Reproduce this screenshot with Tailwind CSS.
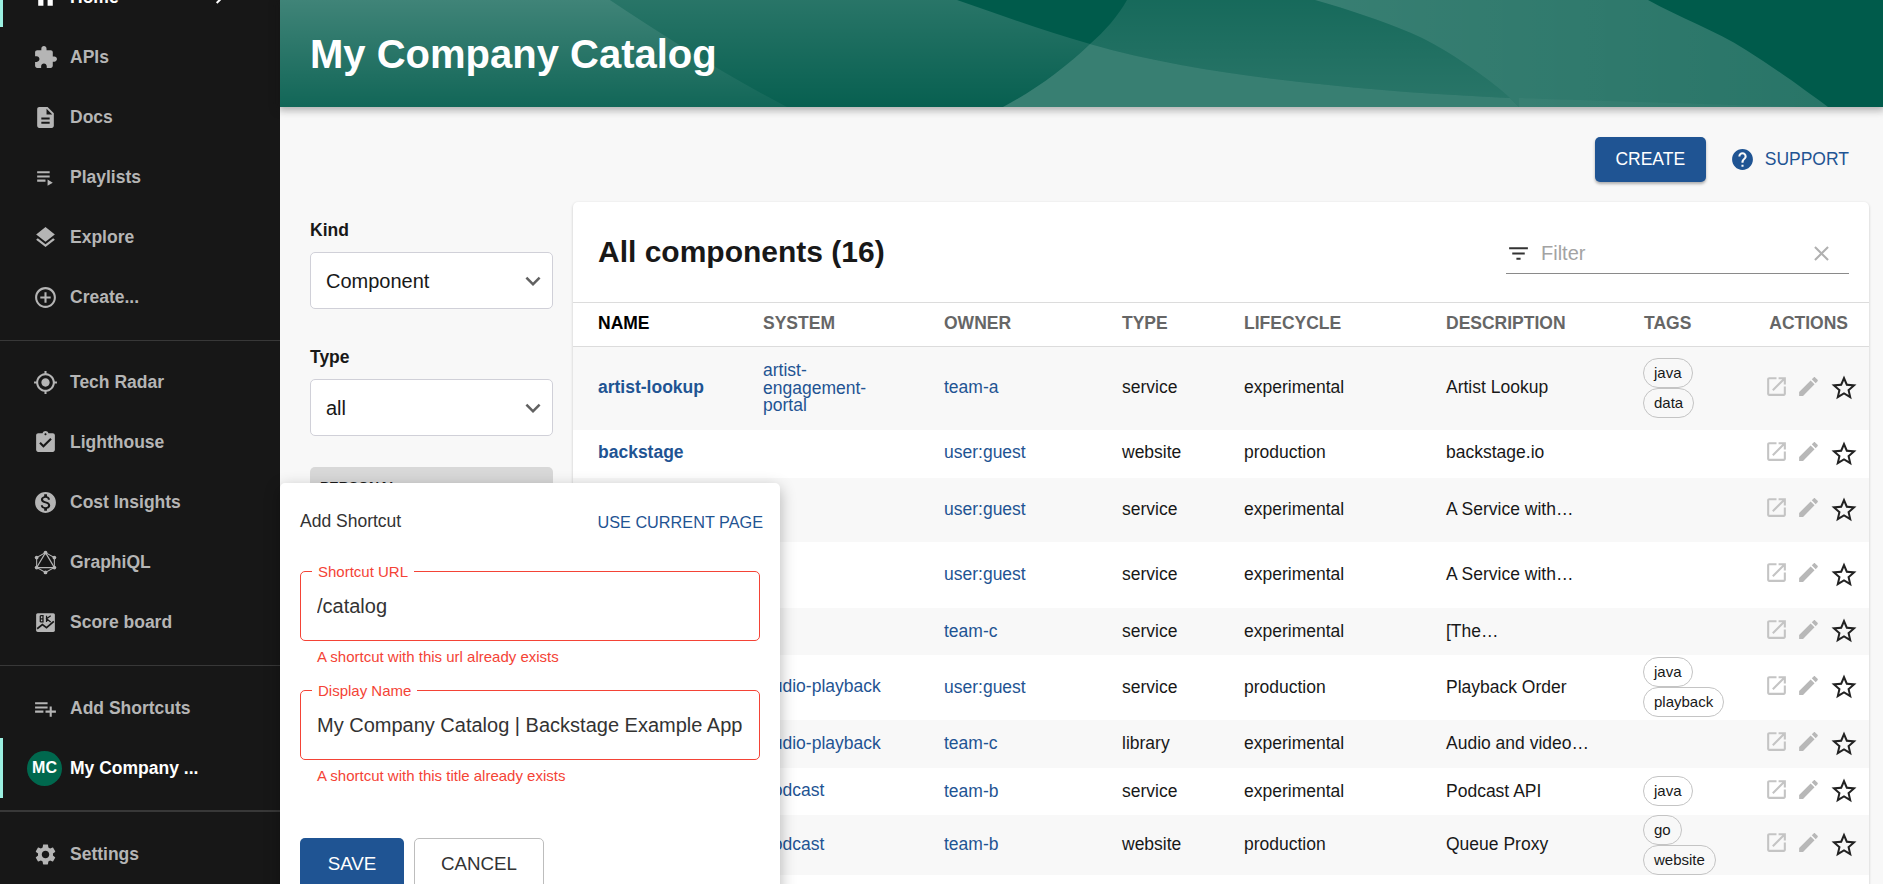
<!DOCTYPE html>
<html lang="en">

<head>
    <meta charset="UTF-8">
    <meta name="viewport" content="width=device-width, initial-scale=1.0">
    <title>My Company Catalog | Backstage Example App</title>
    <script src="https://cdn.jsdelivr.net/npm/@tailwindcss/browser@4"></script>
</head>

<body class="bg-[#f8f8f8] font-['Liberation_Sans',Arial,sans-serif] text-[#181818]">
    <svg class="hidden">
        <symbol id="i-home" viewBox="0 0 24 24"><path d="M10 20v-6h4v6h5v-8h3L12 3 2 12h3v8z"/></symbol>
        <symbol id="i-chevron" viewBox="0 0 24 24"><path d="M10 6L8.59 7.41 13.17 12l-4.58 4.59L10 18l6-6z"/></symbol>
        <symbol id="i-ext" viewBox="0 0 24 24"><path d="M20.5 11H19V7c0-1.1-.9-2-2-2h-4V3.5C13 2.12 11.88 1 10.5 1S8 2.12 8 3.5V5H4c-1.1 0-1.99.9-1.99 2v3.8H3.5c1.49 0 2.7 1.21 2.7 2.7s-1.21 2.7-2.7 2.7H2V20c0 1.1.9 2 2 2h3.8v-1.5c0-1.49 1.21-2.7 2.7-2.7 1.49 0 2.7 1.21 2.7 2.7V22H17c1.1 0 2-.9 2-2v-4h1.5c1.38 0 2.5-1.12 2.5-2.5S21.88 11 20.5 11z"/></symbol>
        <symbol id="i-doc" viewBox="0 0 24 24"><path d="M14 2H6c-1.1 0-1.99.9-1.99 2L4 20c0 1.1.89 2 1.99 2H18c1.1 0 2-.9 2-2V8l-6-6zm2 16H8v-2h8v2zm0-4H8v-2h8v2zm-3-5V3.5L18.5 9H13z"/></symbol>
        <symbol id="i-playlist" viewBox="0 0 24 24"><path d="M4 10h12v2H4zm0-4h12v2H4zm0 8h8v2H4zm10 0v6l5-3z"/></symbol>
        <symbol id="i-layers" viewBox="0 0 24 24"><path d="M11.99 18.54l-7.37-5.73L3 14.07l9 7 9-7-1.63-1.27-7.38 5.74zM12 16l7.36-5.73L21 9l-9-7-9 7 1.63 1.27L12 16z"/></symbol>
        <symbol id="i-add" viewBox="0 0 24 24"><path d="M13 7h-2v4H7v2h4v4h2v-4h4v-2h-4V7zm-1-5C6.48 2 2 6.48 2 12s4.48 10 10 10 10-4.48 10-10S17.52 2 12 2zm0 18c-4.41 0-8-3.59-8-8s3.59-8 8-8 8 3.59 8 8-3.59 8-8 8z"/></symbol>
        <symbol id="i-radar" viewBox="0 0 24 24"><path d="M12 8c-2.21 0-4 1.79-4 4s1.79 4 4 4 4-1.79 4-4-1.79-4-4-4zm8.94 3c-.46-4.17-3.77-7.48-7.94-7.94V1h-2v2.06C6.83 3.52 3.52 6.83 3.06 11H1v2h2.06c.46 4.17 3.77 7.48 7.94 7.94V23h2v-2.06c4.17-.46 7.48-3.77 7.94-7.94H23v-2h-2.06zM12 19c-3.87 0-7-3.13-7-7s3.13-7 7-7 7 3.13 7 7-3.13 7-7 7z"/></symbol>
        <symbol id="i-light" viewBox="0 0 24 24"><path d="M19 3h-4.18C14.4 1.84 13.3 1 12 1c-1.3 0-2.4.84-2.82 2H5c-1.1 0-2 .9-2 2v14c0 1.1.9 2 2 2h14c1.1 0 2-.9 2-2V5c0-1.1-.9-2-2-2zm-7 0c.55 0 1 .45 1 1s-.45 1-1 1-1-.45-1-1 .45-1 1-1zm-2 14l-4-4 1.41-1.41L10 14.17l6.59-6.59L18 9l-8 8z"/></symbol>
        <symbol id="i-money" viewBox="0 0 24 24"><path d="M12 2C6.48 2 2 6.48 2 12s4.48 10 10 10 10-4.48 10-10S17.52 2 12 2zm1.41 16.09V20h-2.67v-1.93c-1.71-.36-3.16-1.46-3.27-3.4h1.96c.1 1.05.82 1.87 2.65 1.87 1.96 0 2.4-.98 2.4-1.59 0-.83-.44-1.61-2.67-2.14-2.48-.6-4.18-1.62-4.18-3.67 0-1.72 1.39-2.84 3.11-3.21V4h2.67v1.95c1.86.45 2.79 1.86 2.85 3.39H14.3c-.05-1.11-.64-1.87-2.22-1.87-1.5 0-2.4.68-2.4 1.64 0 .84.65 1.39 2.67 1.91s4.18 1.39 4.18 3.91c-.01 1.83-1.38 2.83-3.12 3.16z"/></symbol>
        <symbol id="i-graphiql" viewBox="0 0 24 24">
            <path d="M12 2.5L20.5 7.2V16.8L12 21.5L3.5 16.8V7.2Z" fill="none" stroke="currentColor" stroke-width="1"/>
            <path d="M12 2.5L20.5 16.8H3.5Z" fill="none" stroke="currentColor" stroke-width="1.2"/>
            <circle cx="12" cy="2.5" r="1.8"/><circle cx="20.5" cy="7.2" r="1.8"/><circle cx="20.5" cy="16.8" r="1.8"/>
            <circle cx="12" cy="21.5" r="1.8"/><circle cx="3.5" cy="16.8" r="1.8"/><circle cx="3.5" cy="7.2" r="1.8"/>
        </symbol>
        <symbol id="i-score" viewBox="0 0 24 24">
            <rect x="3" y="3" width="18" height="18" rx="1.5"/>
            <path d="M7 5.5v6M7 5.5h2.6v3H7M7 8.5h2.6v3H7M13 5.5v6M17 5.5l-4 3 4 3" fill="none" stroke="#171717" stroke-width="1.2"/>
            <path d="M4 18l5-4 4 3 7-6" fill="none" stroke="#171717" stroke-width="1.6"/>
        </symbol>
        <symbol id="i-plus" viewBox="0 0 24 24"><path d="M14 10H2v2h12v-2zm0-4H2v2h12V6zm4 8v-4h-2v4h-4v2h4v4h2v-4h4v-2h-4zM2 16h8v-2H2v2z"/></symbol>
        <symbol id="i-gear" viewBox="0 0 24 24"><path d="M19.14 12.94c.04-.3.06-.61.06-.94 0-.32-.02-.64-.07-.94l2.03-1.58c.18-.14.23-.41.12-.61l-1.92-3.32c-.12-.22-.37-.29-.59-.22l-2.39.96c-.5-.38-1.03-.7-1.62-.94l-.36-2.54c-.04-.24-.24-.41-.48-.41h-3.84c-.24 0-.43.17-.47.41l-.36 2.54c-.59.24-1.13.57-1.62.94l-2.39-.96c-.22-.08-.47 0-.59.22L2.74 8.87c-.12.21-.08.47.12.61l2.03 1.58c-.05.3-.09.63-.09.94s.02.64.07.94l-2.03 1.58c-.18.14-.23.41-.12.61l1.92 3.32c.12.22.37.29.59.22l2.39-.96c.5.38 1.03.7 1.62.94l.36 2.54c.05.24.24.41.48.41h3.84c.24 0 .44-.17.47-.41l.36-2.54c.59-.24 1.13-.56 1.62-.94l2.39.96c.22.08.47 0 .59-.22l1.92-3.32c.12-.22.07-.47-.12-.61l-2.01-1.58zM12 15.6c-1.98 0-3.6-1.62-3.6-3.6s1.62-3.6 3.6-3.6 3.6 1.62 3.6 3.6-1.62 3.6-3.6 3.6z"/></symbol>
        <symbol id="i-open" viewBox="0 0 24 24"><path d="M19 19H5V5h7V3H5c-1.11 0-2 .9-2 2v14c0 1.1.89 2 2 2h14c1.1 0 2-.9 2-2v-7h-2v7zM14 3v2h3.59l-9.83 9.83 1.41 1.41L19 6.41V10h2V3h-7z"/></symbol>
        <symbol id="i-edit" viewBox="0 0 24 24"><path d="M3 17.25V21h3.75L17.81 9.94l-3.75-3.75L3 17.25zM20.71 7.04c.39-.39.39-1.02 0-1.41l-2.34-2.34c-.39-.39-1.02-.39-1.41 0l-1.83 1.83 3.75 3.75 1.83-1.83z"/></symbol>
        <symbol id="i-star" viewBox="0 0 24 24"><path d="M22 9.24l-7.19-.62L12 2 9.19 8.63 2 9.24l5.46 4.73L5.82 21 12 17.27 18.18 21l-1.63-7.03L22 9.24zM12 15.4l-3.76 2.27 1-4.28-3.32-2.88 4.38-.38L12 6.1l1.71 4.04 4.38.38-3.32 2.88 1 4.28L12 15.4z"/></symbol>
        <symbol id="i-help" viewBox="0 0 24 24"><path d="M12 2C6.48 2 2 6.48 2 12s4.48 10 10 10 10-4.48 10-10S17.52 2 12 2zm1 17h-2v-2h2v2zm2.07-7.75l-.9.92C13.45 12.9 13 13.5 13 15h-2v-.5c0-1.1.45-2.1 1.17-2.83l1.24-1.26c.37-.36.59-.86.59-1.41 0-1.1-.9-2-2-2s-2 .9-2 2H8c0-2.21 1.79-4 4-4s4 1.79 4 4c0 .88-.36 1.68-.93 2.25z"/></symbol>
        <symbol id="i-filter" viewBox="0 0 24 24"><path d="M10 18h4v-2h-4v2zM3 6v2h18V6H3zm3 7h12v-2H6v2z"/></symbol>
        <symbol id="i-close" viewBox="0 0 24 24"><path d="M19 6.41L17.59 5 12 10.59 6.41 5 5 6.41 10.59 12 5 17.59 6.41 19 12 13.41 17.59 19 19 17.59 13.41 12z"/></symbol>
        <symbol id="i-down" viewBox="0 0 24 24"><path d="M16.59 8.59L12 13.17 7.41 8.59 6 10l6 6 6-6z"/></symbol>
    </svg>

    <div class="relative flex h-screen overflow-hidden">
        <!-- sidebar, scrolled a little so Home is cut off -->
        <aside class="w-[280px] shrink-0 bg-[#171717] text-[#b5b5b5] text-[17.5px] font-bold">
            <div class="-mt-[33px]">
                <a class="flex items-center h-[60px] border-l-[3px] border-[#9bf0e1] pl-[29.5px] text-white">
                    <svg class="w-[25px] h-[25px] mr-[12.5px] fill-current"><use href="#i-home"/></svg>
                    Home
                    <svg class="w-[25px] h-[25px] ml-[88px] fill-current"><use href="#i-chevron"/></svg>
                </a>
                <a class="flex items-center h-[60px] pl-[32.5px]"><svg class="w-[25px] h-[25px] mr-[12.5px] fill-current"><use href="#i-ext"/></svg>APIs</a>
                <a class="flex items-center h-[60px] pl-[32.5px]"><svg class="w-[25px] h-[25px] mr-[12.5px] fill-current"><use href="#i-doc"/></svg>Docs</a>
                <a class="flex items-center h-[60px] pl-[32.5px]"><svg class="w-[25px] h-[25px] mr-[12.5px] fill-current"><use href="#i-playlist"/></svg>Playlists</a>
                <a class="flex items-center h-[60px] pl-[32.5px]"><svg class="w-[25px] h-[25px] mr-[12.5px] fill-current"><use href="#i-layers"/></svg>Explore</a>
                <a class="flex items-center h-[60px] pl-[32.5px]"><svg class="w-[25px] h-[25px] mr-[12.5px] fill-current"><use href="#i-add"/></svg>Create...</a>
                <div class="h-px bg-[#383838] mt-[12.5px] mb-[11.5px]"></div>
                <a class="flex items-center h-[60px] pl-[32.5px]"><svg class="w-[25px] h-[25px] mr-[12.5px] fill-current"><use href="#i-radar"/></svg>Tech Radar</a>
                <a class="flex items-center h-[60px] pl-[32.5px]"><svg class="w-[25px] h-[25px] mr-[12.5px] fill-current"><use href="#i-light"/></svg>Lighthouse</a>
                <a class="flex items-center h-[60px] pl-[32.5px]"><svg class="w-[25px] h-[25px] mr-[12.5px] fill-current"><use href="#i-money"/></svg>Cost Insights</a>
                <a class="flex items-center h-[60px] pl-[32.5px]"><svg class="w-[25px] h-[25px] mr-[12.5px] fill-current"><use href="#i-graphiql"/></svg>GraphiQL</a>
                <a class="flex items-center h-[60px] pl-[32.5px]"><svg class="w-[25px] h-[25px] mr-[12.5px] fill-current"><use href="#i-score"/></svg>Score board</a>
                <div class="h-px bg-[#383838] my-[12.5px]"></div>
                <a class="flex items-center h-[60px] pl-[32.5px]"><svg class="w-[25px] h-[25px] mr-[12.5px] fill-current"><use href="#i-plus"/></svg>Add Shortcuts</a>
                <a class="flex items-center h-[60px] border-l-[3px] border-[#9bf0e1] pl-[24px] text-white">
                    <span class="flex items-center justify-center w-[35px] h-[35px] mr-[8px] rounded-full bg-[#00684e] text-[16px]">MC</span>
                    My Company ...
                </a>
                <div class="h-[2px] bg-[#383838] mt-[12px] mb-[12px]"></div>
                <a class="flex items-center h-[60px] pl-[32.5px]"><svg class="w-[25px] h-[25px] mr-[12.5px] fill-current"><use href="#i-gear"/></svg>Settings</a>
            </div>
        </aside>

        <main class="flex-1 min-w-0">
            <header class="relative z-10 flex items-center h-[107px] pl-[30px] bg-[#005b4b] shadow-[0_1px_8px_2px_rgba(20,20,20,0.35)] overflow-hidden">
                <svg class="absolute inset-0 w-[1603px] h-[107px]" viewBox="0 0 1603 107">
                    <defs>
                        <linearGradient id="g1" x1="0" y1="0" x2="0" y2="1">
                            <stop offset="0" stop-color="#fff" stop-opacity="0.25"/>
                            <stop offset="1" stop-color="#fff" stop-opacity="0.07"/>
                        </linearGradient>
                        <linearGradient id="g2" x1="0" y1="0" x2="0" y2="1">
                            <stop offset="0" stop-color="#fff" stop-opacity="0.16"/>
                            <stop offset="1" stop-color="#fff" stop-opacity="0.03"/>
                        </linearGradient>
                        <linearGradient id="g3" x1="0" y1="0" x2="0" y2="1">
                            <stop offset="0" stop-color="#fff" stop-opacity="0.09"/>
                            <stop offset="1" stop-color="#fff" stop-opacity="0.16"/>
                        </linearGradient>
                        <linearGradient id="g4" x1="0" y1="0" x2="1" y2="0">
                            <stop offset="0" stop-color="#fff" stop-opacity="0.22"/>
                            <stop offset="1" stop-color="#fff" stop-opacity="0.16"/>
                        </linearGradient>
                    </defs>
                    <path d="M0 0H330C380 33 440 72 507 107H0Z" fill="url(#g1)"/>
                    <path d="M330 0H677C720 15 765 31 810 44C785 68 755 90 723 107H507C440 72 380 33 330 0Z" fill="url(#g2)"/>
                    <path d="M847 0H1035C1070 10 1100 20 1131 33C1160 45 1205 75 1230 98C1165 95 1090 90 1020 82C950 74 880 64 810 44C825 31 838 16 847 0Z" fill="url(#g3)"/>
                    <path d="M810 44C880 64 950 74 1020 82C1090 90 1165 95 1230 98L1239 107H723C755 90 785 68 810 44Z" fill="#fff" fill-opacity="0.22"/>
                    <path d="M1035 0H1368C1400 18 1435 30 1466 50C1495 68 1525 90 1548 107H1239L1230 98C1205 75 1160 45 1131 33C1100 20 1070 10 1035 0Z" fill="url(#g4)"/>
                    <path d="M1239 98C1300 100 1400 103 1520 107H1239Z" fill="#fff" fill-opacity="0.03"/>
                </svg>
                <h1 class="relative text-[40px] font-bold text-white">My Company Catalog</h1>
            </header>

            <div class="flex items-center justify-end h-[95px] pt-[9px] pr-[34px]">
                <button class="h-[45px] w-[111px] rounded-[5px] bg-[#1f5493] text-white text-[17.5px] shadow-[0_2px_3px_rgba(0,0,0,0.3)]">CREATE</button>
                <a class="flex items-center ml-[24px] text-[#1f5493] text-[17.5px]">
                    <svg class="w-[25px] h-[25px] mr-[10px] fill-current"><use href="#i-help"/></svg>
                    SUPPORT
                </a>
            </div>

            <div class="flex pl-[30px] pr-[14px]">
                <div class="w-[243px] mr-[20px] shrink-0 pt-[18px]">
                    <div class="text-[17.5px] font-bold leading-[20px]">Kind</div>
                    <div class="flex items-center justify-between h-[57px] mt-[12px] pl-[15px] pr-[4px] bg-white border border-[#d0d0d8] rounded-[5px] text-[20px]">
                        Component
                        <svg class="w-[30px] h-[30px] fill-[#616161]"><use href="#i-down"/></svg>
                    </div>
                    <div class="text-[17.5px] font-bold leading-[20px] mt-[38px]">Type</div>
                    <div class="flex items-center justify-between h-[57px] mt-[12px] pl-[15px] pr-[4px] bg-white border border-[#d0d0d8] rounded-[5px] text-[20px]">
                        all
                        <svg class="w-[30px] h-[30px] fill-[#616161]"><use href="#i-down"/></svg>
                    </div>
                    <div class="mt-[31px] h-[120px] pl-[10px] pt-[12px] bg-[#d8d8d8] rounded-t-[5px] text-[14px] leading-[16px] font-bold">PERSONAL</div>
                </div>

                <section class="flex-1 min-w-0 bg-white rounded-t-[5px] shadow-[0_1px_3px_rgba(0,0,0,0.2)]">
                    <div class="flex items-center justify-between h-[100px] pl-[25px] pr-[20px]">
                        <h2 class="text-[30px] font-bold -mt-[2px]">All components (16)</h2>
                        <div class="flex items-center w-[343px] h-[44px] border-b border-[#8a8a8a]">
                            <svg class="w-[25px] h-[25px] mr-[10px] mt-[3px] fill-[#333]"><use href="#i-filter"/></svg>
                            <span class="flex-1 text-[20px] text-[#a3a3a3] mt-[3px]">Filter</span>
                            <svg class="w-[25px] h-[25px] mr-[15.5px] mt-[3px] fill-[#b0b0b0]"><use href="#i-close"/></svg>
                        </div>
                    </div>
                    <table class="w-full table-fixed border-collapse text-[17.5px]">
                        <colgroup>
                            <col class="w-[165px]"><col class="w-[181px]"><col class="w-[178px]"><col class="w-[122px]">
                            <col class="w-[202px]"><col class="w-[198px]"><col class="w-[117px]"><col>
                        </colgroup>
                        <thead>
                            <tr class="h-[44px] border-y border-[#dcdcdc] text-left text-[#666] font-bold">
                                <th class="pl-[25px] pb-[2px] text-black">NAME</th>
                                <th class="pl-[25px] pb-[2px]">SYSTEM</th>
                                <th class="pl-[25px] pb-[2px]">OWNER</th>
                                <th class="pl-[25px] pb-[2px]">TYPE</th>
                                <th class="pl-[25px] pb-[2px]">LIFECYCLE</th>
                                <th class="pl-[25px] pb-[2px]">DESCRIPTION</th>
                                <th class="pl-[25px] pb-[2px]">TAGS</th>
                                <th class="pr-[21px] pb-[2px] text-right">ACTIONS</th>
                            </tr>
                        </thead>
                        <tbody id="rows"></tbody>
                    </table>
                </section>
            </div>
        </main>

        <!-- add shortcut popover -->
        <div class="absolute left-[280px] top-[483px] w-[500px] h-[420px] px-[20px] bg-white rounded-[5px] shadow-[0_5px_16px_rgba(0,0,0,0.3)] z-20">
            <div class="flex items-center justify-between h-[74px]">
                <span class="text-[17.5px] text-[#333] mt-[3px]">Add Shortcut</span>
                <span class="text-[16.25px] text-[#1f5493] mr-[-3px] mt-[4px]">USE CURRENT PAGE</span>
            </div>
            <div class="relative mt-[14px] h-[70px] border border-[#f44336] rounded-[5px]">
                <span class="absolute left-[11px] top-[-9px] px-[6px] bg-white text-[15px] leading-[17px] text-[#f44336]">Shortcut URL</span>
                <input class="w-full h-full pl-[16px] text-[20px] text-[#333] outline-none" value="/catalog">
            </div>
            <p class="pl-[17px] mt-[7px] text-[15px] leading-[17px] text-[#f44336]">A shortcut with this url already exists</p>
            <div class="relative mt-[25px] h-[70px] border border-[#f44336] rounded-[5px]">
                <span class="absolute left-[11px] top-[-9px] px-[6px] bg-white text-[15px] leading-[17px] text-[#f44336]">Display Name</span>
                <input class="w-full h-full pl-[16px] text-[20px] text-[#333] outline-none" value="My Company Catalog | Backstage Example App">
            </div>
            <p class="pl-[17px] mt-[7px] text-[15px] leading-[17px] text-[#f44336]">A shortcut with this title already exists</p>
            <div class="flex mt-[54px] text-[18.75px]">
                <button class="w-[104px] h-[52px] rounded-[5px] bg-[#1f5493] text-white">SAVE</button>
                <button class="w-[130px] h-[52px] ml-[10px] rounded-[5px] border border-[#bdbdbd] text-[#333]">CANCEL</button>
            </div>
        </div>
    </div>

    <script>
        const components = [
            { h: 'h-[83px] [&>td:first-child]:pb-[3px] [&>td:nth-child(n+3):nth-child(-n+6)]:pb-[3px]', name: 'artist-lookup', system: 'artist-engagement-portal', owner: 'team-a', type: 'service', life: 'experimental', desc: 'Artist Lookup', tags: ['java', 'data'] },
            { h: 'h-[48px] [&>td:nth-child(-n+6)]:pb-[2px]', name: 'backstage', system: '', owner: 'user:guest', type: 'website', life: 'production', desc: 'backstage.io', tags: [] },
            { h: 'h-[64px]', name: '', system: '', owner: 'user:guest', type: 'service', life: 'experimental', desc: 'A Service with…', tags: [] },
            { h: 'h-[66px]', name: '', system: '', owner: 'user:guest', type: 'service', life: 'experimental', desc: 'A Service with…', tags: [] },
            { h: 'h-[47px]', name: '', system: '', owner: 'team-c', type: 'service', life: 'experimental', desc: '[The…', tags: [] },
            { h: 'h-[65px]', name: '', system: 'audio-playback', owner: 'user:guest', type: 'service', life: 'production', desc: 'Playback Order', tags: ['java', 'playback'] },
            { h: 'h-[48px]', name: '', system: 'audio-playback', owner: 'team-c', type: 'library', life: 'experimental', desc: 'Audio and video…', tags: [] },
            { h: 'h-[47px]', name: '', system: 'podcast', owner: 'team-b', type: 'service', life: 'experimental', desc: 'Podcast API', tags: ['java'] },
            { h: 'h-[60px]', name: '', system: 'podcast', owner: 'team-b', type: 'website', life: 'production', desc: 'Queue Proxy', tags: ['go', 'website'] },
            { h: 'h-[60px]', name: '', system: '', owner: '', type: '', life: '', desc: '', tags: ['java'] },
        ];

        function icon(id, cls) {
            return `<svg class="${cls}"><use href="#${id}"/></svg>`;
        }

        document.getElementById('rows').innerHTML = components.map((c, i) => `
            <tr class="${c.h} ${i % 2 === 0 ? 'bg-[#f8f8f8]' : 'bg-white'}">
                <td class="pl-[25px] font-bold text-[#1f5493]">${c.name}</td>
                <td class="pl-[25px] text-[#1f5493] leading-[17.5px]"><span class="block max-w-[125px]">${c.system}</span></td>
                <td class="pl-[25px] text-[#1f5493]">${c.owner}</td>
                <td class="pl-[25px]">${c.type}</td>
                <td class="pl-[25px]">${c.life}</td>
                <td class="pl-[25px]">${c.desc}</td>
                <td class="pl-[24px] ${i === 9 ? 'align-top pt-[9px]' : ''}">${c.tags.map(t => `<span class="block w-fit h-[30px] leading-[28px] px-[10px] border border-[#c4c4c4] rounded-full text-[15px]">${t}</span>`).join('')}</td>
                <td class="pr-[10px]">${i === 9 ? '' : `<div class="flex items-center justify-end">
                    ${icon('i-open', 'w-[25px] h-[25px] mr-[7px] -mt-[4px] fill-[#c4c4c4]')}
                    ${icon('i-edit', 'w-[25px] h-[25px] mr-[8px] -mt-[4px] fill-[#b8b8b8]')}
                    ${icon('i-star', 'w-[30px] h-[30px] fill-[#222]')}
                </div>`}</td>
            </tr>`).join('');
    </script>
</body>

</html>
